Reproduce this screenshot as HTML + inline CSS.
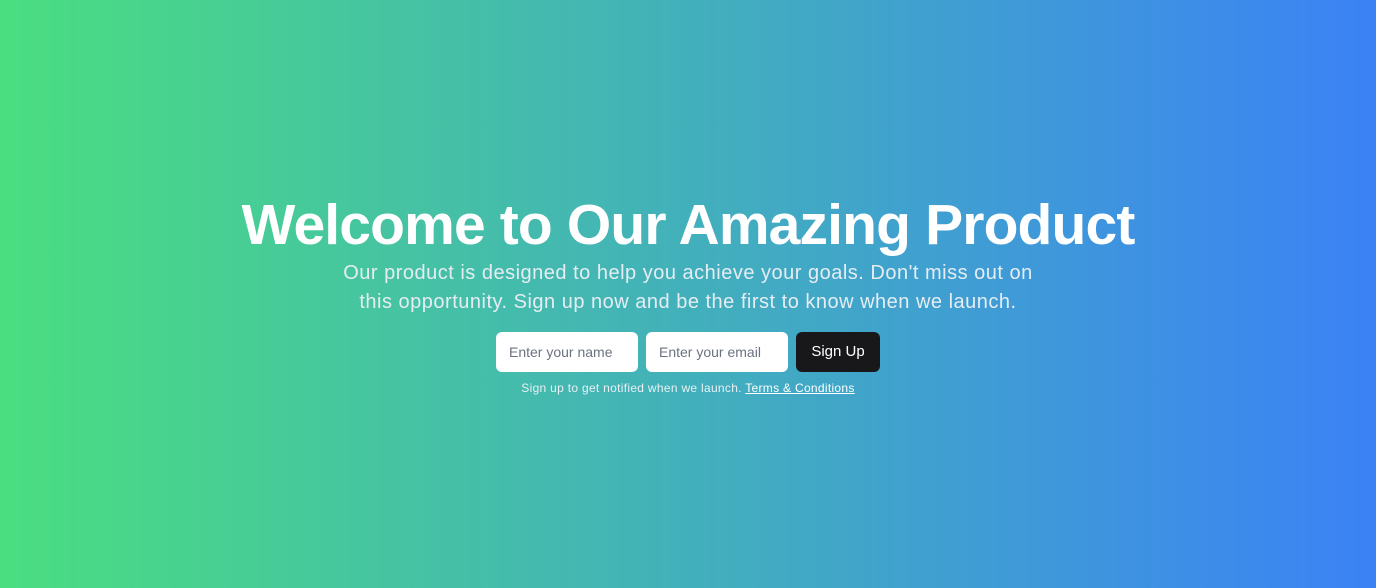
<!DOCTYPE html>
<html><head><style>
html,body{margin:0;width:1376px;height:588px;overflow:hidden}
body{background:linear-gradient(90deg,#4ade80,#3b82f6);font-family:"Liberation Sans",sans-serif;color:#fff;position:relative}
h1{position:absolute;top:193px;left:0;width:1376px;text-align:center;margin:0;font-size:57px;line-height:64px;font-weight:700;letter-spacing:-0.85px}
p.sub{position:absolute;top:259px;left:288px;width:800px;text-align:center;margin:0;font-size:20px;line-height:29px;color:#e5edf3;letter-spacing:0.5px}
.in{position:absolute;top:332px;height:40px;background:#fff;border-radius:6px;box-sizing:border-box;padding-left:13px;font-size:14px;line-height:40px;color:#6b7280}
.btn{position:absolute;top:332px;left:796px;width:84px;height:40px;background:#18181b;border-radius:6px;font-size:15px;line-height:40px;text-align:center;color:#fff}
.small{position:absolute;top:380px;left:0;width:1376px;text-align:center;font-size:12px;line-height:16px;color:#e8f0f5;letter-spacing:0.3px}
.small u{color:#fff}
</style></head><body>
<h1>Welcome to Our Amazing Product</h1>
<p class="sub">Our product is designed to help you achieve your goals. Don't miss out on<br>this opportunity. Sign up now and be the first to know when we launch.</p>
<div class="in" style="left:496px;width:142px">Enter your name</div>
<div class="in" style="left:646px;width:142px">Enter your email</div>
<div class="btn">Sign Up</div>
<div class="small">Sign up to get notified when we launch. <u>Terms &amp; Conditions</u></div>
</body></html>
